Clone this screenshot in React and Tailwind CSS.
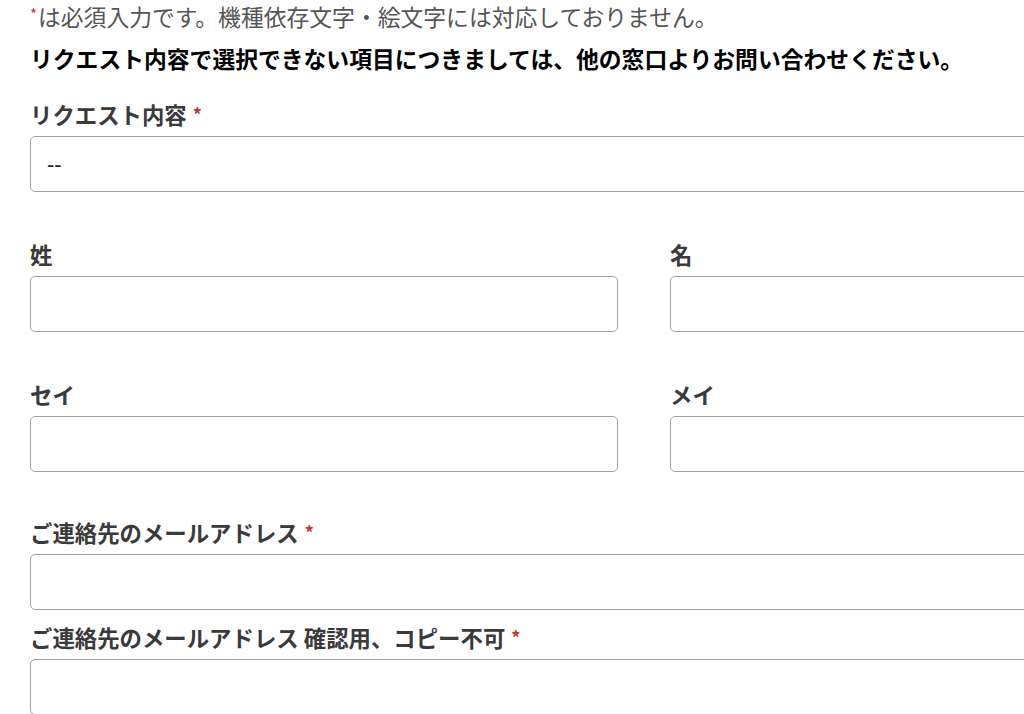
import React from "react";

const font = { fontFamily: '"Noto Sans CJK JP", "Noto Sans", sans-serif' };

function Req() {
  return <span className="ml-[6px] text-[18px] text-[#c23934] align-[2px]">*</span>;
}

function Label({ children, req, className = "" }) {
  return (
    <div className={"text-[22.4px] leading-[28px] font-bold text-[#3a3a3a] " + className}>
      {children}
      {req && <Req />}
    </div>
  );
}

function Box({ children }) {
  return (
    <div className="mt-[8px] h-[56px] w-full rounded-[5px] border-[1.5px] border-[#a3a3a3] bg-white flex items-center px-[16px] text-[22px] text-[#222]">
      {children}
    </div>
  );
}

export default function App() {
  return (
    <div className="w-[1024px] h-[714px] overflow-hidden bg-white" style={font}>
      <div className="w-[1228px] ml-[30px]">
        <div className="text-[22.8px] leading-[28px] text-[#555]">
          <span className="text-[15px] text-[#c23934] align-[6px] mr-[1px]">*</span>
          は必須入力です。機種依存文字・絵文字には対応しておりません。
        </div>
        <div className="mt-[14px] text-[22.8px] leading-[28px] font-bold text-black">
          リクエスト内容で選択できない項目につきましては、他の窓口よりお問い合わせください。
        </div>

        <Label req className="mt-[27px]">リクエスト内容</Label>
        <Box>
          <span style={{ fontFamily: '"Liberation Sans", sans-serif' }}>--</span>
        </Box>

        <div className="grid grid-cols-2 gap-x-[52px] mt-[48px]">
          <div>
            <Label>姓</Label>
            <Box />
          </div>
          <div>
            <Label>名</Label>
            <Box />
          </div>
        </div>

        <div className="grid grid-cols-2 gap-x-[52px] mt-[48px]">
          <div>
            <Label>セイ</Label>
            <Box />
          </div>
          <div>
            <Label>メイ</Label>
            <Box />
          </div>
        </div>

        <Label req className="mt-[46px]">ご連絡先のメールアドレス</Label>
        <Box />

        <Label req className="mt-[13px]">ご連絡先のメールアドレス 確認用、コピー不可</Label>
        <Box />
      </div>
    </div>
  );
}
